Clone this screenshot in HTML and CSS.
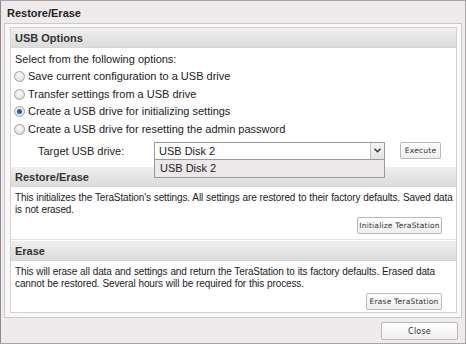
FILE: index.html
```html
<!DOCTYPE html>
<html>
<head>
<meta charset="utf-8">
<link rel="stylesheet" href="styles.css">
</head>
<body>
<div class="win">
  <div class="title">Restore/Erase</div>
  <div class="frame">
    <div class="panel">
      <div class="section usb">
        <div class="shead">USB Options</div>
        <div class="sbody">
          <div class="line">Select from the following options:</div>
          <label class="radio"><span class="dot"></span>Save current configuration to a USB drive</label>
          <label class="radio"><span class="dot"></span>Transfer settings from a USB drive</label>
          <label class="radio"><span class="dot on"></span>Create a USB drive for initializing settings</label>
          <label class="radio"><span class="dot"></span>Create a USB drive for resetting the admin password</label>
          <div class="target">
            <span class="tlabel">Target USB drive:</span>
            <div class="select">
              <span class="sval">USB Disk 2</span>
              <span class="sarrow"><svg width="7" height="5" viewBox="0 0 7 5"><path d="M0.5 0.8 L3.5 3.8 L6.5 0.8" fill="none" stroke="#333" stroke-width="1.4"/></svg></span>
              <div class="dropdown">USB Disk 2</div>
            </div>
            <button class="btn exec">Execute</button>
          </div>
        </div>
      </div>
      <div class="section restore">
        <div class="shead">Restore/Erase</div>
        <div class="sbody">
          <p class="para">This initializes the TeraStation's settings. All settings are restored to their factory defaults. Saved data is not erased.</p>
          <div class="actions"><button class="btn init">Initialize TeraStation</button></div>
        </div>
      </div>
      <div class="section erase">
        <div class="shead">Erase</div>
        <div class="sbody">
          <p class="para">This will erase all data and settings and return the TeraStation to its factory defaults. Erased data cannot be restored. Several hours will be required for this process.</p>
          <div class="actions"><button class="btn erasebtn">Erase TeraStation</button></div>
        </div>
      </div>
    </div>
  </div>
  <div class="footer"><button class="btn close">Close</button></div>
</div>
</body>
</html>
```

FILE: styles.css
```css
* { box-sizing: border-box; }
html, body { margin: 0; padding: 0; background: #ffffff; }
body {
  font-family: "Liberation Sans", Arial, sans-serif;
  font-size: 11px;
  color: #222;
}
.win {
  width: 466px;
  height: 344px;
  border: 1px solid #a9a5a7;
  border-left-color: #8e8a8c;
  background: #efebed;
  display: flex;
  flex-direction: column;
}
.title {
  height: 22px;
  line-height: 24px;
  padding-left: 6px;
  font-weight: bold;
  color: #222;
}
.frame {
  margin: 0 3px 0 3px;
  height: 295px;
  border: 1px solid #cdc9cb;
  background: #f9f8f8;
  padding: 3px 4px 4px 5px;
}
.panel {
  height: 100%;
  border: 1px solid #d2d2d2;
  background: #fff;
  display: flex;
  flex-direction: column;
}
.shead {
  height: 20px;
  line-height: 20px;
  padding-left: 4px;
  font-weight: bold;
  color: #333;
  background: linear-gradient(#efefef, #dcdcdc);
  border-bottom: 1px solid #d6d6d6;
}
.sbody { padding: 2px 2px 0 4px; }
.usb .sbody { height: 119px; padding-top: 2px; padding-right: 5px; }
.line { height: 18px; line-height: 18px; }
.radio {
  display: flex;
  align-items: center;
  height: 17.5px;
  line-height: 17px;
}
.dot {
  width: 11px;
  height: 11px;
  border-radius: 50%;
  border: 1px solid #a3a3a3;
  background: radial-gradient(circle at 50% 35%, #fbfbfb, #d8d8d8);
  margin-right: 3px;
  margin-left: -1px;
  display: flex;
  align-items: center;
  justify-content: center;
}
.dot.on::after {
  content: "";
  width: 5px;
  height: 5px;
  border-radius: 50%;
  background: #2459b3;
}
.target {
  display: flex;
  align-items: center;
  margin-top: 4px;
  height: 17px;
}
.tlabel { width: 139px; padding-left: 23px; }
.select {
  position: relative;
  width: 231px;
  height: 18px;
  border: 1px solid #9a9a9a;
  background: #fff;
  display: flex;
}
.sval { flex: 1; padding-left: 4px; line-height: 16px; }
.sarrow {
  width: 14px;
  border-left: 1px solid #c4c4c4;
  background: linear-gradient(#f6f6f6, #e2e2e2);
  display: flex;
  align-items: center;
  justify-content: center;
}
.dropdown {
  position: absolute;
  left: -1px;
  top: 16px;
  width: 231px;
  height: 19px;
  border: 1px solid #9a9a9a;
  background: #ece8ea;
  padding-left: 5px;
  line-height: 17px;
  z-index: 2;
}
.btn {
  font-family: "DejaVu Sans", sans-serif;
  font-size: 7.5px;
  color: #333;
  border: 1px solid #b9b9b9;
  border-radius: 2px;
  background: linear-gradient(#ffffff, #eeeeee);
  padding: 0;
  height: 17px;
  letter-spacing: 0.2px;
}
.exec { width: 41px; margin-left: 15px; }
.para {
  margin: 3px 0 0 0;
  line-height: 12px;
  font-size: 10px;
  letter-spacing: -0.12px;
  word-spacing: 0.3px;
}
.actions { display: flex; justify-content: flex-end; padding-right: 12px; }
.restore .sbody { height: 52px; }
.restore .actions { margin-top: 1px; }
.init { width: 85px; }
.restore { border-bottom: 1px solid #e2e2e2; }
.erase { margin-top: 1px; }
.erase .sbody { padding-top: 2px; }
.erase .actions { margin-top: 3px; }
.erasebtn { width: 76px; }
.footer {
  display: flex;
  justify-content: flex-end;
  padding: 4px 7px 0 0;
}
.close {
  width: 77px;
  height: 18px;
  font-size: 8px;
}
```
